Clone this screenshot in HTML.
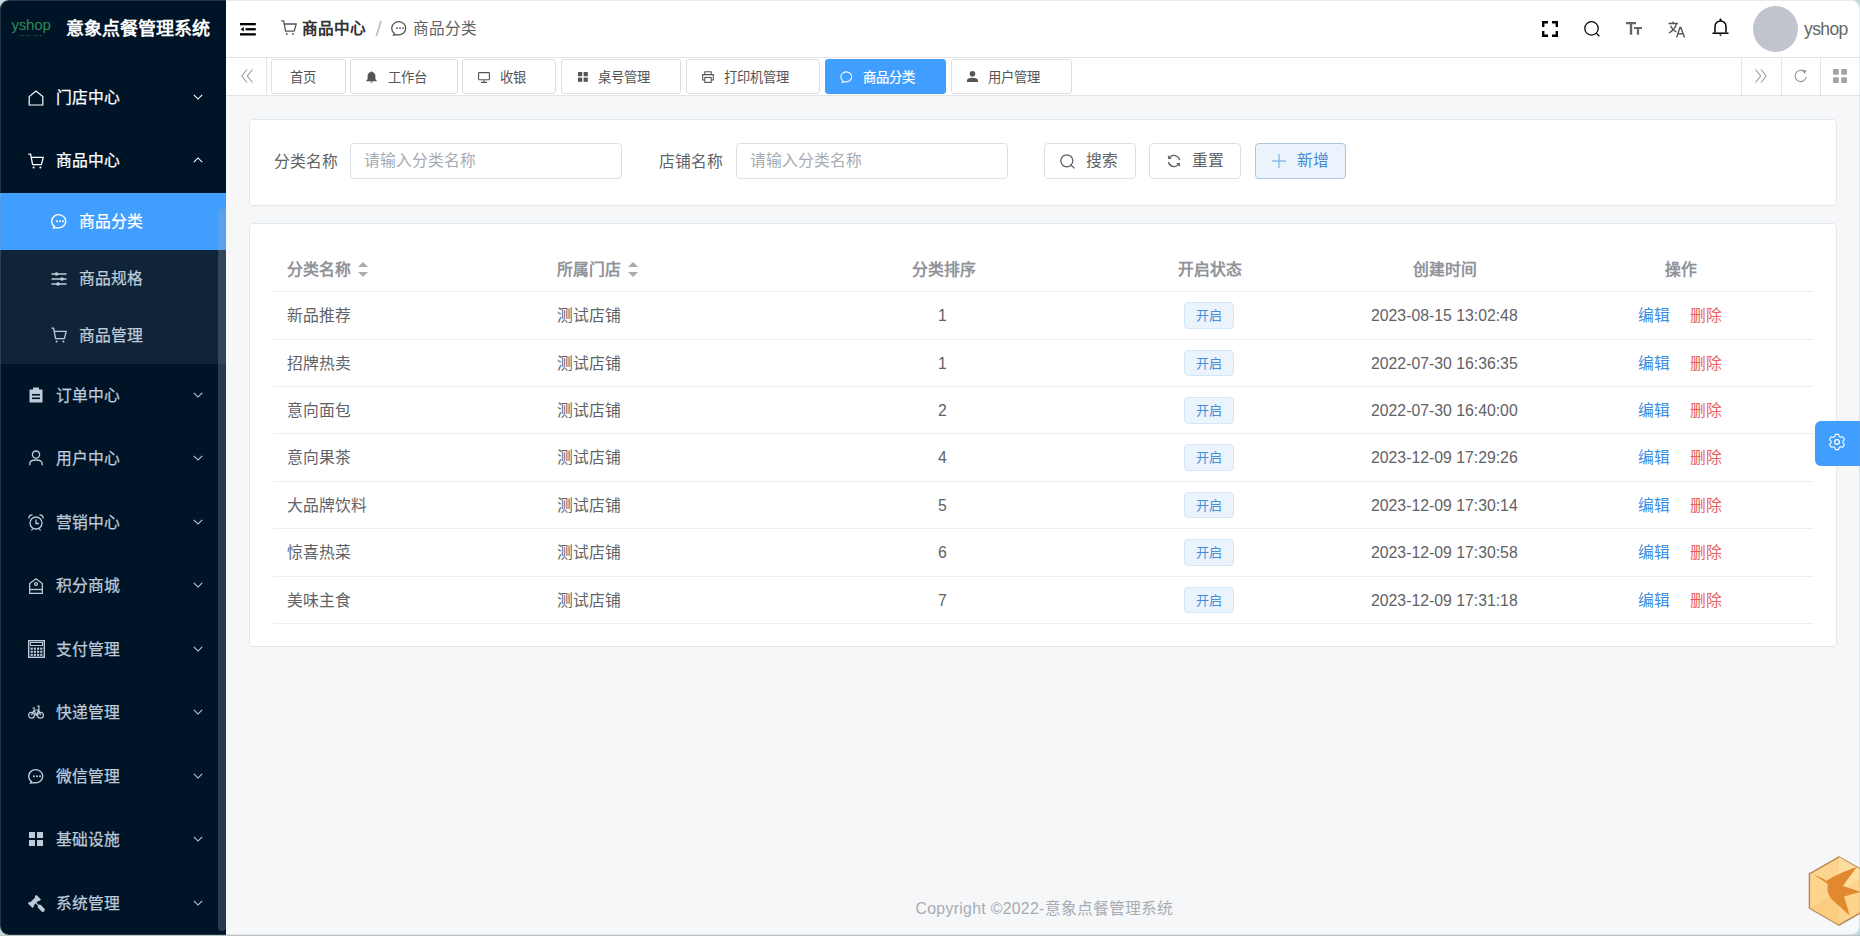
<!DOCTYPE html>
<html lang="zh-CN"><head><meta charset="utf-8"><title>商品分类</title>
<style>
html,body{margin:0;padding:0;width:1860px;height:936px;overflow:hidden;background:#c5d8da;}
body{font-family:"Liberation Sans",sans-serif;position:relative;}
.win{position:absolute;left:0;top:0;width:1860px;height:935px;border-radius:9px;overflow:hidden;background:#f5f7f9;}
.frame{position:absolute;left:0;top:0;width:1860px;height:935px;border-radius:9px;box-sizing:border-box;border:1px solid rgba(150,165,180,0.22);pointer-events:none;}
.bot{position:absolute;left:0;top:935px;width:1860px;height:1px;background:#b8c5c3;}
.abs{position:absolute;}
.t{position:absolute;white-space:nowrap;line-height:1;}
svg{position:absolute;overflow:visible;}
.side{position:absolute;left:0;top:0;width:226px;height:935px;background:#001428;}
.mt{position:absolute;white-space:nowrap;font-size:15.8px;line-height:20px;color:#bfcbd9;-webkit-text-stroke:0.25px currentColor;}
.chev{position:absolute;}
.hdr{position:absolute;left:226px;top:0;width:1634px;height:58px;background:#fff;border-bottom:1px solid #e2e4e8;box-sizing:border-box;}
.tabs{position:absolute;left:226px;top:58px;width:1634px;height:38px;background:#fff;border-bottom:1px solid #e2e4e8;box-sizing:border-box;}
.tab{position:absolute;top:59px;height:35px;border:1px solid #dcdfe6;border-radius:3px;box-sizing:border-box;background:#fff;}
.tt{position:absolute;white-space:nowrap;font-size:13.3px;line-height:16px;color:#555;}
.card{position:absolute;left:249px;width:1588px;background:#fff;border:1px solid #e4e7ed;border-radius:4px;box-sizing:border-box;}
.lbl{position:absolute;white-space:nowrap;color:#606266;font-size:15.8px;line-height:20px;}
.inp{position:absolute;top:143px;height:36px;width:272px;border:1px solid #dcdfe6;border-radius:4px;box-sizing:border-box;background:#fff;}
.ph{position:absolute;white-space:nowrap;font-size:15.8px;line-height:20px;color:#a8abb2;}
.btn{position:absolute;top:143px;height:36px;width:92px;border:1px solid #dcdfe6;border-radius:4px;box-sizing:border-box;background:#fff;}
.bt{position:absolute;white-space:nowrap;font-size:15.8px;line-height:20px;color:#606266;font-weight:500;}
.th{position:absolute;white-space:nowrap;top:260px;font-size:15.8px;font-weight:bold;color:#909399;line-height:20px;}
.cell{position:absolute;white-space:nowrap;font-size:15.8px;color:#606266;line-height:20px;}
.hl{position:absolute;left:273px;width:1540px;height:1px;background:#ebeef5;}
.tag{position:absolute;left:1184px;width:50px;height:26.5px;background:#ebf4fd;border:1px solid #d5e6f6;border-radius:4px;box-sizing:border-box;}
.tagt{position:absolute;white-space:nowrap;font-size:13px;line-height:16px;color:#468cd6;}
</style></head><body>
<div class="win">
<div class="side">
<div class="t" style="left:11.5px;top:17px;font-size:15px;color:#2b8a55;letter-spacing:-0.2px">yshop</div>
<div class="abs" style="left:19px;top:34.5px;width:24px;height:1.5px;background:repeating-linear-gradient(90deg,#1d4f3a 0 2px,transparent 2px 3.5px)"></div>
<div class="t" style="left:66px;top:19px;font-size:18px;font-weight:bold;color:#fff;line-height:20px">意象点餐管理系统</div>
<div class="abs" style="left:0;top:193px;width:226px;height:171px;background:#0f2438"></div>
<div class="abs" style="left:0;top:193px;width:226px;height:57px;background:#409eff"></div>
<div class="mt" style="left:56px;top:87.75px;color:#fff">门店中心</div>
<svg style="left:28px;top:90.25px" width="16" height="16" viewBox="0 0 16 16" ><path d="M1.2 6.6 L8 1 L14.8 6.6 V15 H1.2 Z" fill="none" stroke="#fff" stroke-width="1.2" stroke-linejoin="miter"/></svg>
<svg style="left:193px;top:93.95px" width="10" height="6" viewBox="0 0 10 6.5" ><path d="M0.5 1 L5 5.5 L9.5 1" fill="none" stroke="#fff" stroke-width="1.2"/></svg>
<div class="mt" style="left:56px;top:151.25px;color:#fff">商品中心</div>
<svg style="left:28px;top:153.25px" width="16" height="16" viewBox="0 0 16 16" ><path d="M0.3 1.2 H2.6 L4.6 11.6 H13.4 L15.2 4.3 H3.4" fill="none" stroke="#fff" stroke-width="1.3" stroke-linejoin="round"/><circle cx="5.6" cy="14.6" r="1" fill="#fff"/><circle cx="12.4" cy="14.6" r="1" fill="#fff"/></svg>
<svg style="left:193px;top:157.45px" width="10" height="6" viewBox="0 0 10 6.5" ><path d="M0.5 5.5 L5 1 L9.5 5.5" fill="none" stroke="#fff" stroke-width="1.2"/></svg>
<div class="mt" style="left:56px;top:385.75px;color:#bfcbd9">订单中心</div>
<svg style="left:29px;top:387.25px" width="14" height="16" viewBox="0 0 14 16" ><path d="M0.5 2.5 H13.5 V15.5 H0.5 Z" fill="#bfcbd9"/><rect x="4" y="0.5" width="6" height="3" fill="#bfcbd9"/><rect x="3" y="7" width="8" height="1.6" fill="#001428"/><rect x="3" y="10.5" width="8" height="1.6" fill="#001428"/></svg>
<svg style="left:193px;top:391.95px" width="10" height="6" viewBox="0 0 10 6.5" ><path d="M0.5 1 L5 5.5 L9.5 1" fill="none" stroke="#bfcbd9" stroke-width="1.2"/></svg>
<div class="mt" style="left:56px;top:449.25px;color:#bfcbd9">用户中心</div>
<svg style="left:29px;top:450.25px" width="14" height="16" viewBox="0 0 14 16" ><circle cx="7" cy="4.6" r="3.6" fill="none" stroke="#bfcbd9" stroke-width="1.3"/><path d="M0.8 15.2 V13.8 C0.8 11.2 3.2 10 7 10 C10.8 10 13.2 11.2 13.2 13.8 V15.2" fill="none" stroke="#bfcbd9" stroke-width="1.3"/></svg>
<svg style="left:193px;top:455.45px" width="10" height="6" viewBox="0 0 10 6.5" ><path d="M0.5 1 L5 5.5 L9.5 1" fill="none" stroke="#bfcbd9" stroke-width="1.2"/></svg>
<div class="mt" style="left:56px;top:512.75px;color:#bfcbd9">营销中心</div>
<svg style="left:28px;top:514.25px" width="16" height="17" viewBox="0 0 16 17" ><circle cx="8" cy="9" r="6" fill="none" stroke="#bfcbd9" stroke-width="1.3"/><path d="M8 5.5 V9.5 H11" fill="none" stroke="#bfcbd9" stroke-width="1.3"/><path d="M0.8 4.5 C0.8 2 2.5 0.8 4.5 0.8" fill="none" stroke="#bfcbd9" stroke-width="1.3"/><path d="M15.2 4.5 C15.2 2 13.5 0.8 11.5 0.8" fill="none" stroke="#bfcbd9" stroke-width="1.3"/><path d="M3.5 16.5 L4.8 14.5 M12.5 16.5 L11.2 14.5" stroke="#bfcbd9" stroke-width="1.3"/></svg>
<svg style="left:193px;top:518.95px" width="10" height="6" viewBox="0 0 10 6.5" ><path d="M0.5 1 L5 5.5 L9.5 1" fill="none" stroke="#bfcbd9" stroke-width="1.2"/></svg>
<div class="mt" style="left:56px;top:576.25px;color:#bfcbd9">积分商城</div>
<svg style="left:29px;top:577.75px" width="14" height="16" viewBox="0 0 14 16" ><path d="M0.7 5.5 L7 0.8 L13.3 5.5 V15.3 H0.7 Z" fill="none" stroke="#bfcbd9" stroke-width="1.3"/><circle cx="7" cy="6" r="1.4" fill="none" stroke="#bfcbd9" stroke-width="1.2"/><path d="M0.7 11.5 H13.3" stroke="#bfcbd9" stroke-width="1.3"/></svg>
<svg style="left:193px;top:582.45px" width="10" height="6" viewBox="0 0 10 6.5" ><path d="M0.5 1 L5 5.5 L9.5 1" fill="none" stroke="#bfcbd9" stroke-width="1.2"/></svg>
<div class="mt" style="left:56px;top:639.75px;color:#bfcbd9">支付管理</div>
<svg style="left:27.5px;top:640.25px" width="17" height="18" viewBox="0 0 17 18" ><rect x="0.7" y="0.7" width="15.6" height="16.6" fill="none" stroke="#bfcbd9" stroke-width="1.4"/><rect x="2.5" y="2.5" width="12" height="3" fill="none" stroke="#bfcbd9" stroke-width="1"/><rect x="2.6" y="7.6" width="2.2" height="2.1" fill="#bfcbd9"/><rect x="5.800000000000001" y="7.6" width="2.2" height="2.1" fill="#bfcbd9"/><rect x="9.0" y="7.6" width="2.2" height="2.1" fill="#bfcbd9"/><rect x="12.200000000000001" y="7.6" width="2.2" height="2.1" fill="#bfcbd9"/><rect x="2.6" y="10.7" width="2.2" height="2.1" fill="#bfcbd9"/><rect x="5.800000000000001" y="10.7" width="2.2" height="2.1" fill="#bfcbd9"/><rect x="9.0" y="10.7" width="2.2" height="2.1" fill="#bfcbd9"/><rect x="12.200000000000001" y="10.7" width="2.2" height="2.1" fill="#bfcbd9"/><rect x="2.6" y="13.8" width="2.2" height="2.1" fill="#bfcbd9"/><rect x="5.800000000000001" y="13.8" width="2.2" height="2.1" fill="#bfcbd9"/><rect x="9.0" y="13.8" width="2.2" height="2.1" fill="#bfcbd9"/><rect x="12.200000000000001" y="13.8" width="2.2" height="2.1" fill="#bfcbd9"/></svg>
<svg style="left:193px;top:645.95px" width="10" height="6" viewBox="0 0 10 6.5" ><path d="M0.5 1 L5 5.5 L9.5 1" fill="none" stroke="#bfcbd9" stroke-width="1.2"/></svg>
<div class="mt" style="left:56px;top:703.25px;color:#bfcbd9">快递管理</div>
<svg style="left:28px;top:704.75px" width="16" height="14" viewBox="0 0 16 14" ><circle cx="3.5" cy="10.2" r="2.9" fill="none" stroke="#bfcbd9" stroke-width="1.2"/><circle cx="12.5" cy="10.2" r="2.9" fill="none" stroke="#bfcbd9" stroke-width="1.2"/><path d="M3.5 10.2 L6 5 H10.8 L12.5 10.2 M6 5 L8.2 10.2 L10.8 5 M9.3 1.2 H11 L10.8 5 M4.6 3.2 H7" fill="none" stroke="#bfcbd9" stroke-width="1.2"/></svg>
<svg style="left:193px;top:709.45px" width="10" height="6" viewBox="0 0 10 6.5" ><path d="M0.5 1 L5 5.5 L9.5 1" fill="none" stroke="#bfcbd9" stroke-width="1.2"/></svg>
<div class="mt" style="left:56px;top:766.75px;color:#bfcbd9">微信管理</div>
<svg style="left:29px;top:769.25px" width="16" height="15" viewBox="0 0 16 15" ><path d="M2.6 12.6 A7 6.6 0 1 1 5.2 13.7 L1.2 14.2 Z" fill="none" stroke="#bfcbd9" stroke-width="1.3" stroke-linejoin="round"/><circle cx="5" cy="7.2" r="1" fill="#bfcbd9"/><circle cx="8" cy="7.2" r="1" fill="#bfcbd9"/><circle cx="11" cy="7.2" r="1" fill="#bfcbd9"/></svg>
<svg style="left:193px;top:772.95px" width="10" height="6" viewBox="0 0 10 6.5" ><path d="M0.5 1 L5 5.5 L9.5 1" fill="none" stroke="#bfcbd9" stroke-width="1.2"/></svg>
<div class="mt" style="left:56px;top:830.25px;color:#bfcbd9">基础设施</div>
<svg style="left:29px;top:831.75px" width="14" height="14" viewBox="0 0 14 14" ><rect x="0" y="0" width="6" height="6" fill="#bfcbd9"/><rect x="8" y="0" width="6" height="6" fill="#bfcbd9"/><rect x="0" y="8" width="6" height="6" fill="#bfcbd9"/><rect x="8" y="8" width="6" height="6" fill="#bfcbd9"/></svg>
<svg style="left:193px;top:836.45px" width="10" height="6" viewBox="0 0 10 6.5" ><path d="M0.5 1 L5 5.5 L9.5 1" fill="none" stroke="#bfcbd9" stroke-width="1.2"/></svg>
<div class="mt" style="left:56px;top:893.75px;color:#bfcbd9">系统管理</div>
<svg style="left:28.7px;top:895.55px" width="18" height="18" viewBox="0 0 18 18" ><g transform="rotate(-45 9 9)"><rect x="4.6" y="1.6" width="8.8" height="4.6" fill="#bfcbd9"/><rect x="3" y="0.6" width="2.6" height="6.6" rx="0.6" fill="#bfcbd9"/><rect x="12.4" y="0.6" width="2.6" height="6.6" rx="0.6" fill="#bfcbd9"/><rect x="8.4" y="6" width="1.2" height="3.6" fill="#bfcbd9"/><rect x="7" y="9.4" width="4" height="8.4" rx="2" fill="#bfcbd9"/></g></svg>
<svg style="left:193px;top:899.95px" width="10" height="6" viewBox="0 0 10 6.5" ><path d="M0.5 1 L5 5.5 L9.5 1" fill="none" stroke="#bfcbd9" stroke-width="1.2"/></svg>
<div class="mt" style="left:79px;top:211.50px;color:#fff">商品分类</div>
<svg style="left:51.6px;top:214.0px" width="16" height="15" viewBox="0 0 16 15" ><path d="M2.6 12.6 A7 6.6 0 1 1 5.2 13.7 L1.2 14.2 Z" fill="none" stroke="#fff" stroke-width="1.3" stroke-linejoin="round"/><circle cx="5" cy="7.2" r="1" fill="#fff"/><circle cx="8" cy="7.2" r="1" fill="#fff"/><circle cx="11" cy="7.2" r="1" fill="#fff"/></svg>
<div class="mt" style="left:79px;top:268.50px;color:#bfcbd9">商品规格</div>
<svg style="left:51px;top:271.5px" width="16" height="14" viewBox="0 0 16 14" ><path d="M0.5 2 H15.5 M0.5 7 H15.5 M0.5 12 H15.5" stroke="#bfcbd9" stroke-width="1.3"/><circle cx="5.5" cy="2" r="1.8" fill="#bfcbd9"/><circle cx="11" cy="7" r="1.8" fill="#bfcbd9"/><circle cx="7" cy="12" r="1.8" fill="#bfcbd9"/></svg>
<div class="mt" style="left:79px;top:325.50px;color:#bfcbd9">商品管理</div>
<svg style="left:51px;top:326.5px" width="16" height="16" viewBox="0 0 16 16" ><path d="M0.3 1.2 H2.6 L4.6 11.6 H13.4 L15.2 4.3 H3.4" fill="none" stroke="#bfcbd9" stroke-width="1.3" stroke-linejoin="round"/><circle cx="5.6" cy="14.6" r="1" fill="#bfcbd9"/><circle cx="12.4" cy="14.6" r="1" fill="#bfcbd9"/></svg>
<div class="abs" style="left:218px;top:209px;width:8px;height:722px;background:rgba(160,170,185,0.25);border-radius:0 0 4px 4px"></div>
</div>
<div class="hdr"></div>
<svg style="left:240.3px;top:22.6px" width="16" height="13" viewBox="0 0 16 13" ><rect x="0" y="0" width="15.8" height="2.3" fill="#000"/><rect x="5.5" y="5.1" width="10.3" height="2.3" fill="#000"/><rect x="0" y="10.2" width="15.8" height="2.3" fill="#000"/><path d="M0.6 6.25 L3.8 4.1 V8.4 Z" fill="#000"/></svg>
<svg style="left:281px;top:20px" width="16" height="15" viewBox="0 0 16 15" ><path d="M0.3 0.8 H2.6 L4.6 11.2 H13.2 L15.2 4 H3.4" fill="none" stroke="#555" stroke-width="1.3" stroke-linejoin="round"/><circle cx="5.8" cy="14" r="0.95" fill="#555"/><circle cx="12" cy="14" r="0.95" fill="#555"/></svg>
<div class="t" style="left:302px;top:18.5px;font-size:15.6px;line-height:20px;font-weight:bold;color:#303133">商品中心</div>
<div class="abs" style="left:380.3px;top:21.2px;width:1.5px;height:15.3px;background:#bfc3ca;transform:skewX(-17deg);transform-origin:0 0"></div>
<svg style="left:392px;top:20.5px" width="16" height="15" viewBox="0 0 16 15" ><path d="M2.6 12.6 A7 6.6 0 1 1 5.2 13.7 L1.2 14.2 Z" fill="none" stroke="#555" stroke-width="1.2" stroke-linejoin="round"/><circle cx="5" cy="7.2" r="0.9" fill="#555"/><circle cx="8" cy="7.2" r="0.9" fill="#555"/><circle cx="11" cy="7.2" r="0.9" fill="#555"/></svg>
<div class="t" style="left:413px;top:18.5px;font-size:15.6px;line-height:20px;color:#606266">商品分类</div>
<svg style="left:1542px;top:21px" width="16" height="16" viewBox="0 0 16 16" ><path d="M1.2 6 V1.2 H6 M10 1.2 H14.8 V6 M14.8 10 V14.8 H10 M6 14.8 H1.2 V10" fill="none" stroke="#000" stroke-width="2.4"/></svg>
<svg style="left:1584px;top:21px" width="17" height="17" viewBox="0 0 17 17" ><circle cx="7.5" cy="7.4" r="6.7" fill="none" stroke="#000" stroke-width="1.25"/><path d="M12.4 12.3 L15.4 15.4" stroke="#000" stroke-width="1.25"/></svg>
<svg style="left:1626px;top:22px" width="16" height="13" viewBox="0 0 16 13" ><path d="M0 0 H10 V2.2 H6.2 V12.8 H3.8 V2.2 H0 Z" fill="#666"/><path d="M8 5 H16 V7 H13.1 V12.8 H10.9 V7 H8 Z" fill="#666"/></svg>
<svg style="left:1668px;top:21px" width="18" height="17" viewBox="0 0 18 17" ><path d="M0.5 2.5 H10 M5 0.5 V2.5 M8.5 2.5 C7.5 7 4.5 10 0.8 12 M2.5 4.8 C4 8 6 10 8.5 11" fill="none" stroke="#555" stroke-width="1.3"/><path d="M8.6 16.6 L12 6.5 H12.8 L16.6 16.6 M10 12.8 H15.2" fill="none" stroke="#555" stroke-width="1.4"/></svg>
<svg style="left:1711.5px;top:19px" width="17" height="18" viewBox="0 0 17 18" ><path d="M8.5 1 C8.5 1 8.5 0.5 8.5 0.5" stroke="#000" stroke-width="2" stroke-linecap="round"/><path d="M3 13.5 V7.5 C3 4.3 5.5 2 8.5 2 C11.5 2 14 4.3 14 7.5 V13.5" fill="none" stroke="#000" stroke-width="1.5"/><path d="M0.5 14.2 H16.5" stroke="#000" stroke-width="1.5"/><path d="M7 15.5 H10 L8.5 17.3 Z" fill="#000"/></svg>
<div class="abs" style="left:1752.5px;top:5.5px;width:45.5px;height:46.5px;border-radius:50%;background:#c0c4cc"></div>
<div class="t" style="left:1804px;top:19px;font-size:17.5px;line-height:20px;color:#666;letter-spacing:-0.6px">yshop</div>
<div class="tabs"></div>
<div class="abs" style="left:266px;top:58px;width:1px;height:37px;background:#e2e4e8"></div>
<svg style="left:241px;top:69px" width="12" height="14" viewBox="0 0 12 14" ><path d="M6 0.5 L0.8 7 L6 13.5 M11.5 0.5 L6.3 7 L11.5 13.5" fill="none" stroke="#999" stroke-width="1.1"/></svg>
<div class="abs" style="left:1741px;top:58px;width:1px;height:37px;background:#e2e4e8"></div>
<div class="abs" style="left:1781px;top:58px;width:1px;height:37px;background:#e2e4e8"></div>
<div class="abs" style="left:1820px;top:58px;width:1px;height:37px;background:#e2e4e8"></div>
<svg style="left:1755px;top:69px" width="12" height="14" viewBox="0 0 12 14" ><path d="M0.5 0.5 L5.7 7 L0.5 13.5 M6 0.5 L11.2 7 L6 13.5" fill="none" stroke="#999" stroke-width="1.1"/></svg>
<svg style="left:1793.5px;top:69px" width="14" height="14" viewBox="0 0 14 14" ><path d="M12.3 8 A5.6 5.6 0 1 1 10.2 2.5" fill="none" stroke="#999" stroke-width="1.2"/><path d="M8.2 0.6 L12.4 1.5 L10.6 5 Z" fill="#999"/></svg>
<svg style="left:1833px;top:69px" width="14" height="14" viewBox="0 0 14 14" ><rect x="0" y="0" width="5.8" height="5.8" rx="0.7" fill="#a3a3a3"/><rect x="8.2" y="0" width="5.8" height="5.8" rx="0.7" fill="#a3a3a3"/><rect x="0" y="8.2" width="5.8" height="5.8" rx="0.7" fill="#a3a3a3"/><rect x="8.2" y="8.2" width="5.8" height="5.8" rx="0.7" fill="#a3a3a3"/></svg>
<div class="tab" style="left:271px;width:75px"></div>
<div class="tt" style="left:290px;top:69.5px;color:#555">首页</div>
<div class="tab" style="left:350px;width:108px"></div>
<div class="tt" style="left:388px;top:69.5px;color:#555">工作台</div>
<svg style="left:366px;top:70.5px" width="11" height="12" viewBox="0 0 11 12" ><path d="M5.5 0.3 C5.1 0.3 4.8 0.6 4.8 1 C2.8 1.4 1.6 3 1.6 5 V8.3 L0.3 9.6 V10.2 H10.7 V9.6 L9.4 8.3 V5 C9.4 3 8.2 1.4 6.2 1 C6.2 0.6 5.9 0.3 5.5 0.3 Z" fill="#555"/><path d="M4.3 10.6 H6.7 C6.7 11.3 6.2 11.8 5.5 11.8 C4.8 11.8 4.3 11.3 4.3 10.6Z" fill="#555"/></svg>
<div class="tab" style="left:462px;width:94px"></div>
<div class="tt" style="left:500px;top:69.5px;color:#555">收银</div>
<svg style="left:477.5px;top:71.5px" width="12" height="11" viewBox="0 0 12 11" ><rect x="0.6" y="0.6" width="10.8" height="7.2" rx="0.8" fill="none" stroke="#555" stroke-width="1.1"/><path d="M6 8 V10 M3 10.4 H9" stroke="#555" stroke-width="1.1"/></svg>
<div class="tab" style="left:561px;width:120px"></div>
<div class="tt" style="left:598px;top:69.5px;color:#555">桌号管理</div>
<svg style="left:577.5px;top:72px" width="10" height="10" viewBox="0 0 10 10" ><rect x="0" y="0" width="4.2" height="4.2" fill="#555"/><rect x="5.6" y="0" width="4.2" height="4.2" fill="#555"/><rect x="0" y="5.6" width="4.2" height="4.2" fill="#555"/><rect x="5.6" y="5.6" width="4.2" height="4.2" fill="#555"/></svg>
<div class="tab" style="left:686px;width:134px"></div>
<div class="tt" style="left:723.5px;top:69.5px;color:#555">打印机管理</div>
<svg style="left:701.5px;top:70.5px" width="12" height="12" viewBox="0 0 12 12" ><path d="M2.8 3.5 V0.8 H9.2 V3.5" fill="none" stroke="#555" stroke-width="1.1"/><path d="M2.6 9 H0.7 V3.6 H11.3 V9 H9.4" fill="none" stroke="#555" stroke-width="1.1"/><rect x="2.8" y="6.5" width="6.4" height="4.9" fill="none" stroke="#555" stroke-width="1.1"/></svg>
<div class="tab" style="left:825px;width:121px;background:#409eff;border-color:#409eff"></div>
<div class="tt" style="left:863px;top:69.5px;color:#fff;-webkit-text-stroke:0.25px #fff">商品分类</div>
<svg style="left:840.5px;top:71px" width="12" height="12" viewBox="0 0 12 12" ><path d="M2 9.9 A5.4 5 0 1 1 4.2 10.8 L1 11.3 Z" fill="none" stroke="#fff" stroke-width="1.1" stroke-linejoin="round"/></svg>
<div class="tab" style="left:951px;width:121px"></div>
<div class="tt" style="left:988px;top:69.5px;color:#555">用户管理</div>
<svg style="left:967px;top:71px" width="11" height="11" viewBox="0 0 11 11" ><circle cx="5.5" cy="2.8" r="2.8" fill="#555"/><path d="M0 11 V9.6 C0 7.6 2.2 6.8 5.5 6.8 C8.8 6.8 11 7.6 11 9.6 V11 Z" fill="#555"/></svg>
<div class="card" style="top:119px;height:87px"></div>
<div class="lbl" style="left:274px;top:152px">分类名称</div>
<div class="inp" style="left:350px"></div><div class="ph" style="left:363.5px;top:151px">请输入分类名称</div>
<div class="lbl" style="left:659px;top:152px">店铺名称</div>
<div class="inp" style="left:736px"></div><div class="ph" style="left:749.5px;top:151px">请输入分类名称</div>
<div class="btn" style="left:1044px"></div>
<svg style="left:1060px;top:154px" width="16" height="15" viewBox="0 0 16 15" ><circle cx="6.8" cy="6.8" r="6" fill="none" stroke="#606266" stroke-width="1.3"/><path d="M11.2 11.2 L14.6 14.4" stroke="#606266" stroke-width="1.3"/></svg>
<div class="bt" style="left:1086px;top:151px">搜索</div>
<div class="btn" style="left:1149px"></div>
<svg style="left:1167px;top:154px" width="14" height="14" viewBox="0 0 14 14" ><path d="M12.6 6 A5.8 5.8 0 0 0 2.4 3.6" fill="none" stroke="#606266" stroke-width="1.3"/><path d="M1.4 8 A5.8 5.8 0 0 0 11.6 10.4" fill="none" stroke="#606266" stroke-width="1.3"/><path d="M0.8 1.2 L1.2 5.2 L5 4.6 Z" fill="#606266"/><path d="M13.2 12.8 L12.8 8.8 L9 9.4 Z" fill="#606266"/></svg>
<div class="bt" style="left:1192px;top:151px">重置</div>
<div class="btn" style="left:1255px;width:91px;background:#ebf4fd;border-color:#a9c6de"></div>
<svg style="left:1272px;top:154px" width="14" height="14" viewBox="0 0 14 14" ><path d="M7 0 V14 M0 7 H14" stroke="#8dbbe8" stroke-width="1.4"/></svg>
<div class="bt" style="left:1296.5px;top:151px;color:#4289d4">新增</div>
<div class="card" style="top:223px;height:424px"></div>
<div class="th" style="left:287px">分类名称</div>
<svg style="left:358px;top:262px" width="10" height="15" viewBox="0 0 10 15" ><path d="M5 0 L10 5 H0 Z" fill="#a8abb2"/><path d="M5 15 L10 10 H0 Z" fill="#a8abb2"/></svg>
<div class="th" style="left:557px">所属门店</div>
<svg style="left:628px;top:262px" width="10" height="15" viewBox="0 0 10 15" ><path d="M5 0 L10 5 H0 Z" fill="#a8abb2"/><path d="M5 15 L10 10 H0 Z" fill="#a8abb2"/></svg>
<div class="th" style="left:911.5px">分类排序</div>
<div class="th" style="left:1178px">开启状态</div>
<div class="th" style="left:1413px">创建时间</div>
<div class="th" style="left:1664.5px">操作</div>
<div class="hl" style="top:291px"></div>
<div class="cell" style="left:287px;top:306.20px">新品推荐</div>
<div class="cell" style="left:557px;top:306.20px">测试店铺</div>
<div class="cell" style="left:938px;top:306.20px">1</div>
<div class="tag" style="top:302.20px"></div><div class="tagt" style="left:1196px;top:308.20px">开启</div>
<div class="cell" style="left:1371px;top:306.20px">2023-08-15 13:02:48</div>
<div class="cell" style="left:1638px;top:306.20px;color:#3b8ee0">编辑</div>
<div class="cell" style="left:1690px;top:306.20px;color:#e5605e">删除</div>
<div class="hl" style="top:338.50px"></div>
<div class="cell" style="left:287px;top:353.63px">招牌热卖</div>
<div class="cell" style="left:557px;top:353.63px">测试店铺</div>
<div class="cell" style="left:938px;top:353.63px">1</div>
<div class="tag" style="top:349.63px"></div><div class="tagt" style="left:1196px;top:355.63px">开启</div>
<div class="cell" style="left:1371px;top:353.63px">2022-07-30 16:36:35</div>
<div class="cell" style="left:1638px;top:353.63px;color:#3b8ee0">编辑</div>
<div class="cell" style="left:1690px;top:353.63px;color:#e5605e">删除</div>
<div class="hl" style="top:385.93px"></div>
<div class="cell" style="left:287px;top:401.06px">意向面包</div>
<div class="cell" style="left:557px;top:401.06px">测试店铺</div>
<div class="cell" style="left:938px;top:401.06px">2</div>
<div class="tag" style="top:397.06px"></div><div class="tagt" style="left:1196px;top:403.06px">开启</div>
<div class="cell" style="left:1371px;top:401.06px">2022-07-30 16:40:00</div>
<div class="cell" style="left:1638px;top:401.06px;color:#3b8ee0">编辑</div>
<div class="cell" style="left:1690px;top:401.06px;color:#e5605e">删除</div>
<div class="hl" style="top:433.36px"></div>
<div class="cell" style="left:287px;top:448.49px">意向果茶</div>
<div class="cell" style="left:557px;top:448.49px">测试店铺</div>
<div class="cell" style="left:938px;top:448.49px">4</div>
<div class="tag" style="top:444.49px"></div><div class="tagt" style="left:1196px;top:450.49px">开启</div>
<div class="cell" style="left:1371px;top:448.49px">2023-12-09 17:29:26</div>
<div class="cell" style="left:1638px;top:448.49px;color:#3b8ee0">编辑</div>
<div class="cell" style="left:1690px;top:448.49px;color:#e5605e">删除</div>
<div class="hl" style="top:480.79px"></div>
<div class="cell" style="left:287px;top:495.92px">大品牌饮料</div>
<div class="cell" style="left:557px;top:495.92px">测试店铺</div>
<div class="cell" style="left:938px;top:495.92px">5</div>
<div class="tag" style="top:491.92px"></div><div class="tagt" style="left:1196px;top:497.92px">开启</div>
<div class="cell" style="left:1371px;top:495.92px">2023-12-09 17:30:14</div>
<div class="cell" style="left:1638px;top:495.92px;color:#3b8ee0">编辑</div>
<div class="cell" style="left:1690px;top:495.92px;color:#e5605e">删除</div>
<div class="hl" style="top:528.22px"></div>
<div class="cell" style="left:287px;top:543.35px">惊喜热菜</div>
<div class="cell" style="left:557px;top:543.35px">测试店铺</div>
<div class="cell" style="left:938px;top:543.35px">6</div>
<div class="tag" style="top:539.35px"></div><div class="tagt" style="left:1196px;top:545.35px">开启</div>
<div class="cell" style="left:1371px;top:543.35px">2023-12-09 17:30:58</div>
<div class="cell" style="left:1638px;top:543.35px;color:#3b8ee0">编辑</div>
<div class="cell" style="left:1690px;top:543.35px;color:#e5605e">删除</div>
<div class="hl" style="top:575.65px"></div>
<div class="cell" style="left:287px;top:590.78px">美味主食</div>
<div class="cell" style="left:557px;top:590.78px">测试店铺</div>
<div class="cell" style="left:938px;top:590.78px">7</div>
<div class="tag" style="top:586.78px"></div><div class="tagt" style="left:1196px;top:592.78px">开启</div>
<div class="cell" style="left:1371px;top:590.78px">2023-12-09 17:31:18</div>
<div class="cell" style="left:1638px;top:590.78px;color:#3b8ee0">编辑</div>
<div class="cell" style="left:1690px;top:590.78px;color:#e5605e">删除</div>
<div class="hl" style="top:623.08px"></div>
<div class="t" style="left:915.5px;top:899px;font-size:15.8px;line-height:20px;color:#a8abb2"><span style="letter-spacing:0.32px">Copyright ©2022-</span>意象点餐管理系统</div>
<div class="abs" style="left:1815px;top:421px;width:50px;height:45px;background:#409eff;border-radius:6px 0 0 6px"></div>
<svg style="left:1829px;top:434.3px" width="16" height="16" viewBox="0 0 16 16" ><path d="M5.79 2.42 L6.38 0.37 L9.62 0.37 L10.21 2.42 L11.73 3.30 L13.80 2.78 L15.42 5.59 L13.94 7.12 L13.94 8.88 L15.42 10.41 L13.80 13.22 L11.73 12.70 L10.21 13.58 L9.62 15.63 L6.38 15.63 L5.79 13.58 L4.27 12.70 L2.20 13.22 L0.58 10.41 L2.06 8.88 L2.06 7.12 L0.58 5.59 L2.20 2.78 L4.27 3.30 Z" fill="none" stroke="#fff" stroke-width="1.1" stroke-linejoin="round"/><circle cx="8" cy="8" r="2.4" fill="none" stroke="#fff" stroke-width="1.2"/></svg>
<svg style="left:1800px;top:850px" width="80" height="85" viewBox="0 0 80 85">
<path d="M39.0 6.8 L68.6 23.9 L68.6 58.1 L39.0 75.2 L9.4 58.1 L9.4 23.9 Z" fill="#fcd48e" stroke="#b58756" stroke-width="1.4" stroke-linejoin="round"/>
<path d="M39 6.8 L68.6 23.9 L39 41 Z" fill="#fde2a6" opacity=".7"/>
<path d="M39 41 L9.4 58.1 L39 75.2 Z" fill="#f8c878" opacity=".6"/>
<path d="M14.5 25.5 C19 26.5 23 28 26.5 31 C33 26 45 21 57 17 C52 23 47 30 43 36 C49 38 55 40 61 42 C55 43.5 49 45 44 46.5 C46 53 48 59 49.5 65.5 C44 60 38 55 33 50.5 C28 46 26.5 40 28 34.5 C24 31 19.5 28 14.5 25.5 Z" fill="#e0892f"/>
</svg>
</div>
<div class="frame"></div><div class="bot"></div>
</body></html>
